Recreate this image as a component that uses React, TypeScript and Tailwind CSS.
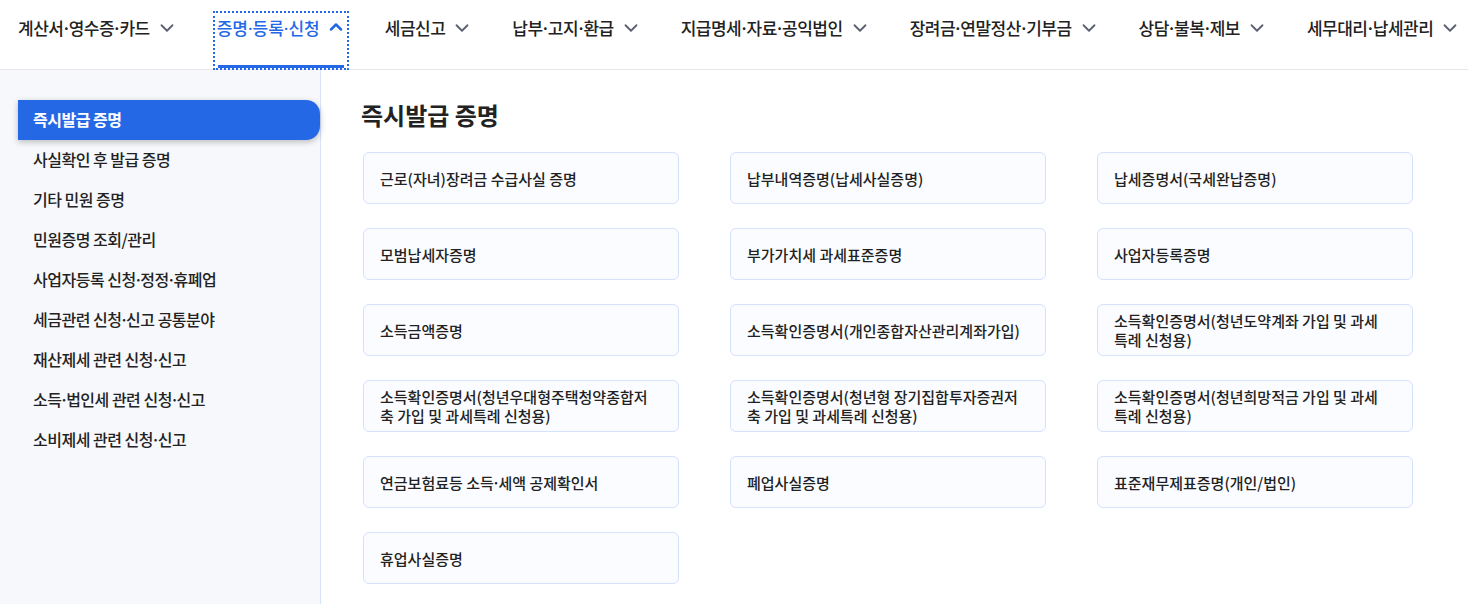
import React from "react";
import { ChevronDown, ChevronUp } from "lucide-react";

const menus = [
	"계산서·영수증·카드",
	"증명·등록·신청",
	"세금신고",
	"납부·고지·환급",
	"지급명세·자료·공익법인",
	"장려금·연말정산·기부금",
	"상담·불복·제보",
	"세무대리·납세관리",
];

const sideItems = [
	"즉시발급 증명",
	"사실확인 후 발급 증명",
	"기타 민원 증명",
	"민원증명 조회/관리",
	"사업자등록 신청·정정·휴폐업",
	"세금관련 신청·신고 공통분야",
	"재산제세 관련 신청·신고",
	"소득·법인세 관련 신청·신고",
	"소비제세 관련 신청·신고",
];

const cards = [
	"근로(자녀)장려금 수급사실 증명",
	"납부내역증명(납세사실증명)",
	"납세증명서(국세완납증명)",
	"모범납세자증명",
	"부가가치세 과세표준증명",
	"사업자등록증명",
	"소득금액증명",
	"소득확인증명서(개인종합자산관리계좌가입)",
	"소득확인증명서(청년도약계좌 가입 및 과세특례 신청용)",
	"소득확인증명서(청년우대형주택청약종합저축 가입 및 과세특례 신청용)",
	"소득확인증명서(청년형 장기집합투자증권저축 가입 및 과세특례 신청용)",
	"소득확인증명서(청년희망적금 가입 및 과세특례 신청용)",
	"연금보험료등 소득·세액 공제확인서",
	"폐업사실증명",
	"표준재무제표증명(개인/법인)",
	"휴업사실증명",
];

// split on middle dots so the dot can be narrowed like the original font
const Dotted = ({ text, narrow }: { text: string; narrow?: boolean }) => {
	const parts = text.split("·");
	return (
		<>
			{parts.map((p, i) => (
				<React.Fragment key={i}>
					{i > 0 &&
						(narrow ? (
							<span style={{ fontFamily: '"Noto Sans", sans-serif' }}>·</span>
						) : (
							<span className="mx-[-2px]">·</span>
						))}
					{p}
				</React.Fragment>
			))}
		</>
	);
};

const App = () => {
	return (
		<div
			className="w-full h-[604px] flex flex-col bg-white text-[#222] overflow-hidden"
			style={{ fontFamily: '"Noto Sans CJK KR", "Noto Sans", sans-serif' }}
		>
			{/* Top navigation */}
			<div className="h-[70px] shrink-0 border-b border-[#e5e7eb] flex items-start pl-[15px] gap-[34px]">
				{menus.map((m, i) => {
					const active = i === 1;
					return (
						<div
							key={m}
							className={`relative mt-[12px] h-[57px] pl-[3px] pr-[2px] pt-[4px] flex items-start gap-[6px] text-[17px] leading-[24px] font-medium whitespace-nowrap ${
								active
									? "text-[#2468e6] outline-2 outline-dotted outline-[#2468e6] -outline-offset-1"
									: "text-[#222] tracking-[-0.5px]"
							}`}
						>
							<span>
								<Dotted text={m} narrow={active} />
							</span>
							{active ? (
								<ChevronUp size={20} strokeWidth={3} className="mt-[1px] text-[#2468e6]" />
							) : (
								<ChevronDown size={22} strokeWidth={2} className="mt-[1px] text-[#5b6170]" />
							)}
							{active && (
								<div className="absolute left-[4px] right-[4px] bottom-[1px] h-[3px] bg-[#2468e6]" />
							)}
						</div>
					);
				})}
			</div>

			<div className="flex flex-1 min-h-0">
				{/* Sidebar */}
				<div className="w-[321px] shrink-0 bg-[#f6f8fc] border-r border-[#d6e3f8] pt-[30px]">
					{sideItems.map((s, i) =>
						i === 0 ? (
							<div
								key={s}
								className="ml-[18px] h-[40px] flex items-center pl-[15px] pb-[2px] bg-[#2468e6] text-white rounded-r-[14px] shadow-[0_2px_6px_rgba(0,0,0,0.25)] text-[16px] font-bold tracking-[-0.5px]"
							>
								{s}
							</div>
						) : (
							<div
								key={s}
								className="ml-[18px] h-[40px] flex items-center pl-[15px] pb-[2px] text-[16px] font-medium text-[#222] tracking-[-0.5px]"
							>
								<span>
									<Dotted text={s} />
								</span>
							</div>
						)
					)}
				</div>

				{/* Content */}
				<div className="flex-1 pl-[40px] pt-[28px]">
					<h1 className="text-[24px] leading-[34px] font-bold text-[#222] mb-[20px]">즉시발급 증명</h1>
					<div className="ml-[2px] grid grid-cols-[316px_316px_316px] gap-x-[51px] gap-y-[24px]">
						{cards.map((c) => (
							<div
								key={c}
								className="h-[52px] rounded-[6px] border border-[#d5e2fb] bg-[#fafcff] flex items-center pl-[16px] pr-[22px] text-[15px] leading-[19px] font-medium text-[#222]"
							>
								<span>
									<Dotted text={c} />
								</span>
							</div>
						))}
					</div>
				</div>
			</div>
		</div>
	);
};

export default App;
